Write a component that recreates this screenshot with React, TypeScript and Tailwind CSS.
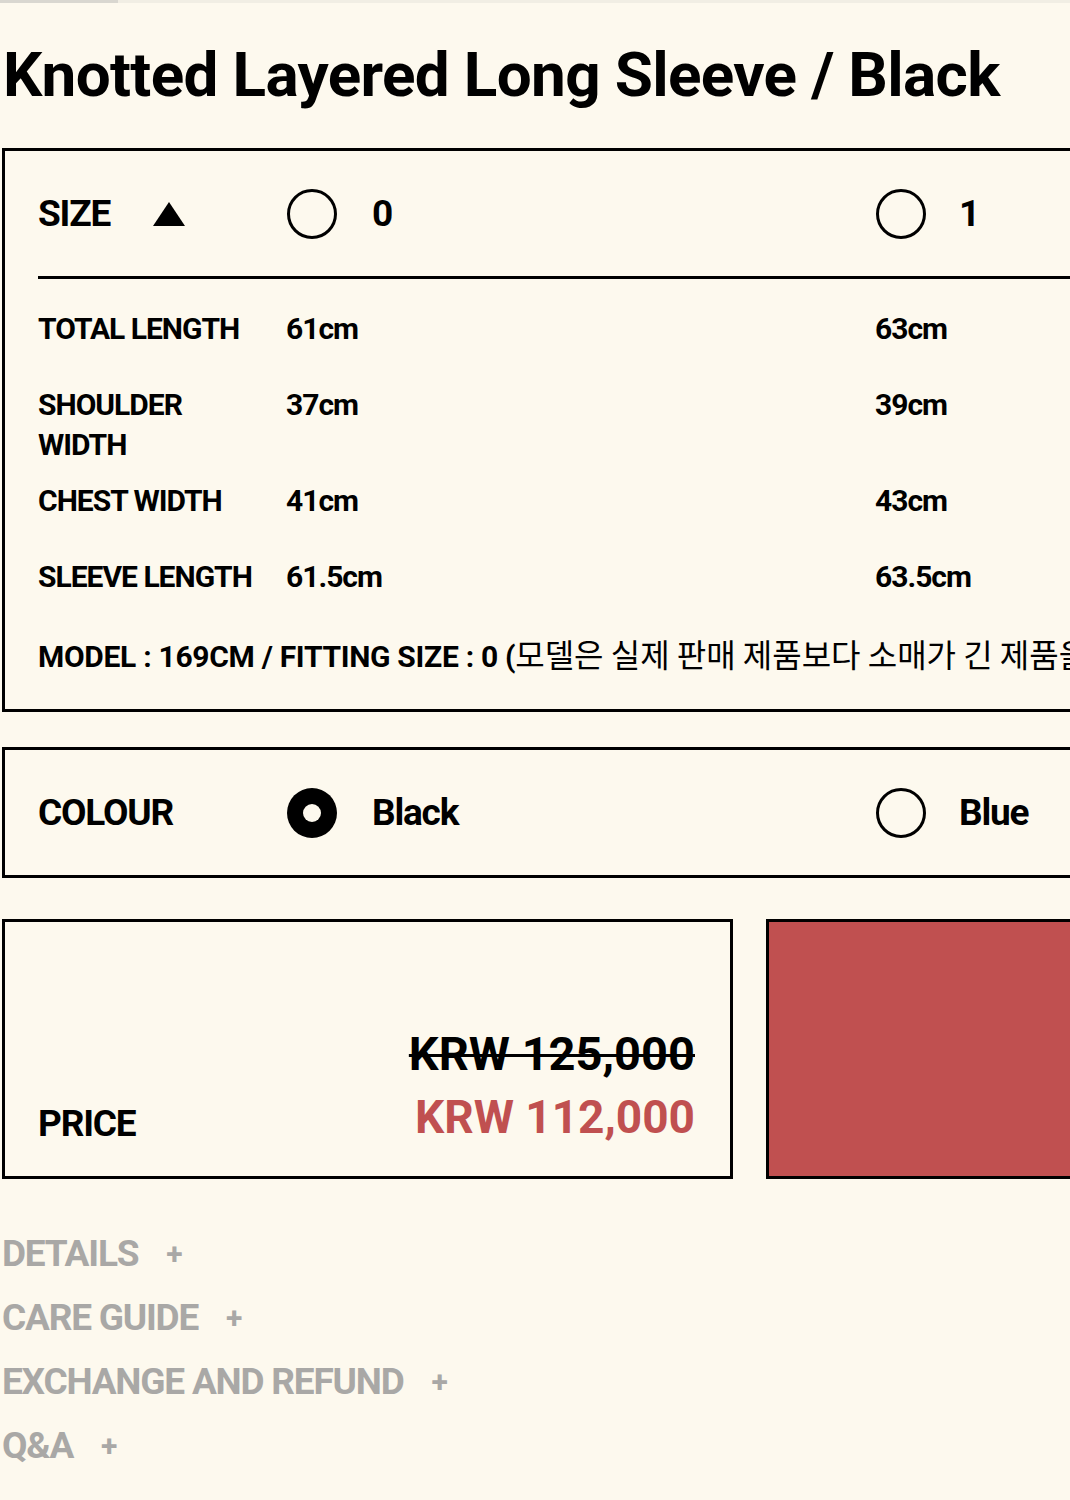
import React from "react";

const FONT = "font-['Roboto',sans-serif]";

function Circle({ filled }: { filled?: boolean }) {
  return (
    <svg width="52" height="52" viewBox="0 0 52 52" className="shrink-0">
      {filled ? (
        <>
          <circle cx="26" cy="26" r="25" fill="#000" />
          <circle cx="26" cy="26" r="9" fill="#fdf9ee" />
        </>
      ) : (
        <circle cx="26" cy="26" r="23.5" fill="none" stroke="#000" strokeWidth="3" />
      )}
    </svg>
  );
}

const rows = [
  { label: ["TOTAL LENGTH"], a: "61cm", b: "63cm" },
  { label: ["SHOULDER", "WIDTH"], a: "37cm", b: "39cm" },
  { label: ["CHEST WIDTH"], a: "41cm", b: "43cm" },
  { label: ["SLEEVE LENGTH"], a: "61.5cm", b: "63.5cm" },
];

export default function App() {
  return (
    <div className={`w-[1070px] h-[1500px] overflow-hidden bg-[#fdf9ee] text-black ${FONT}`}>
      <div className="flex h-[3px]">
        <div className="w-[118px] bg-[#d9d7d0]" />
        <div className="flex-1 bg-[#f1eee4]" />
      </div>

      <h1 className="pl-[3px] pt-[32px] text-[62px] font-bold leading-[80px] tracking-[-0.65px] whitespace-nowrap">
        Knotted Layered Long Sleeve / Black
      </h1>

      {/* SIZE box */}
      <div className="ml-[2px] mt-[33px] w-[1200px] border-[3px] border-black pl-[33px]">
        <div className="grid h-[125px] grid-cols-[248px_589px_1fr] items-center">
          <div className="flex items-center gap-[42px] text-[37px] font-bold tracking-[-1.2px]">
            <span>SIZE</span>
            <svg width="34" height="26" viewBox="0 0 34 26">
              <polygon points="17,1 33,25 1,25" fill="#000" />
            </svg>
          </div>
          <div className="flex items-center gap-[34px] text-[37px] font-bold">
            <Circle />
            <span>0</span>
          </div>
          <div className="flex items-center gap-[32px] text-[37px] font-bold">
            <Circle />
            <span>1</span>
          </div>
        </div>
        <div className="h-[3px] bg-black" />
        <div className="pt-[30px] text-[30px] font-bold leading-[40px] tracking-[-1px]">
          {rows.map((r) => (
            <div key={r.a} className="mb-[16px] grid min-h-[60px] grid-cols-[248px_589px_1fr]">
              <div>
                {r.label.map((l) => (
                  <div key={l}>{l}</div>
                ))}
              </div>
              <div>{r.a}</div>
              <div>{r.b}</div>
            </div>
          ))}
          <div className="mt-[5px] whitespace-nowrap pb-[32px] tracking-[-0.3px]">
            MODEL : 169CM / FITTING SIZE : 0 (
            <span className="font-normal font-['Noto_Sans_CJK_KR',sans-serif] text-[32px] tracking-[0px]">
              모델은 실제 판매 제품보다 소매가 긴 제품을 착용하였습니다
            </span>
            )
          </div>
        </div>
      </div>

      {/* COLOUR box */}
      <div className="ml-[2px] mt-[35px] grid h-[131px] w-[1200px] grid-cols-[248px_589px_1fr] items-center border-[3px] border-black pl-[33px] text-[37px] font-bold tracking-[-1.2px]">
        <span>COLOUR</span>
        <div className="flex items-center gap-[34px]">
          <Circle filled />
          <span>Black</span>
        </div>
        <div className="flex items-center gap-[32px]">
          <Circle />
          <span>Blue</span>
        </div>
      </div>

      {/* PRICE */}
      <div className="ml-[2px] mt-[41px] flex w-[1200px] gap-[33px]">
        <div className="flex h-[260px] w-[731px] shrink-0 items-end justify-between border-[3px] border-black pb-[28px] pl-[33px] pr-[35px]">
          <span className="text-[37px] font-bold leading-[48px] tracking-[-1.2px]">PRICE</span>
          <div className="flex flex-col items-end font-bold">
            <span className="text-[47px] leading-[64px] line-through decoration-[3px]">KRW 125,000</span>
            <span className="text-[46px] leading-[62px] text-[#c05050]">KRW 112,000</span>
          </div>
        </div>
        <div className="h-[260px] flex-1 border-[3px] border-black bg-[#c05050]" />
      </div>

      {/* Accordion */}
      <div className="mt-[43px] pl-[2px] text-[37px] font-bold leading-[64px] tracking-[-1.2px] text-[#a9a8a6]">
        {["DETAILS", "CARE GUIDE", "EXCHANGE AND REFUND", "Q&A"].map((t) => (
          <div key={t} className="flex items-center gap-[28px]">
            <span>{t}</span>
            <span className="text-[30px]">+</span>
          </div>
        ))}
      </div>
    </div>
  );
}
